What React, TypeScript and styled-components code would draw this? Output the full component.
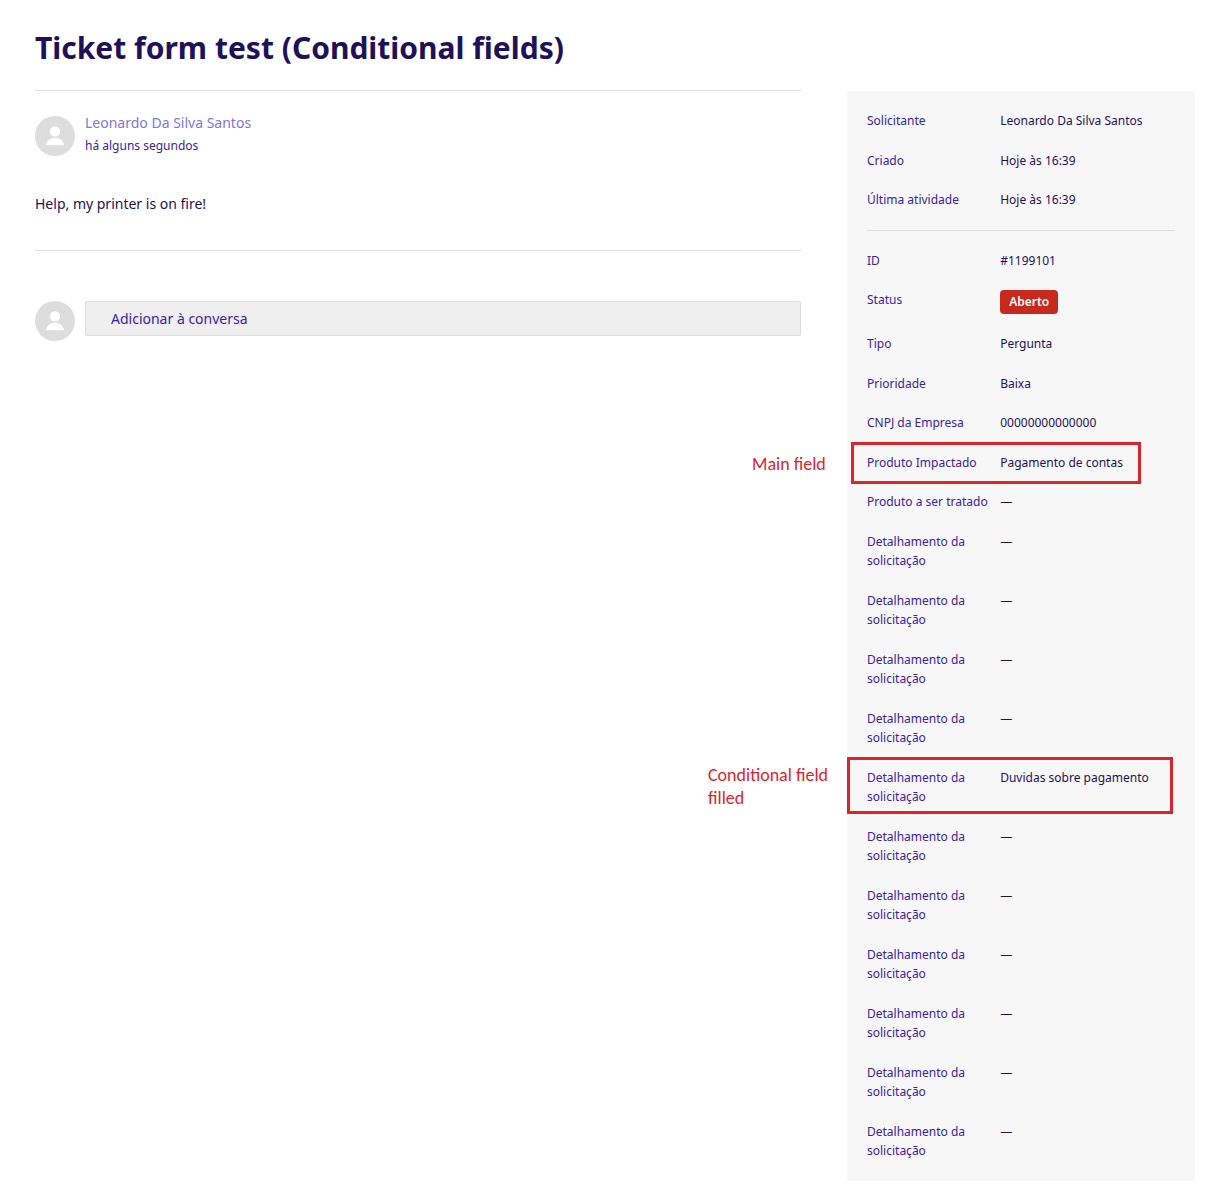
import React from "react";
import styled, { createGlobalStyle } from "styled-components";

const GlobalStyle = createGlobalStyle`
  * { box-sizing: border-box; }
  body {
    margin: 0;
    background: #fff;
    color: #1f1159;
    font-family: "Segoe UI", "Noto Sans", "Open Sans", sans-serif;
    font-size: 14px;
    line-height: 1.5;
  }
`;

const Page = styled.div`
  padding: 24px 15px 4px 35px;
`;

const Title = styled.h1`
  margin: 0 0 18px;
  font-size: 30px;
  font-weight: 700;
  line-height: 48px;
`;

const Columns = styled.div`
  display: flex;
  justify-content: space-between;
  align-items: flex-start;
`;

const Main = styled.main`
  flex: 0 0 66%;
`;

const Message = styled.article`
  border-top: 1px solid #ddd;
  border-bottom: 1px solid #ddd;
  padding: 20px 0 34px;
`;

const Author = styled.header`
  display: flex;
  align-items: flex-end;
  gap: 10px;
`;

const AvatarCircle = styled.svg`
  flex: none;
  width: 40px;
  height: 40px;
`;

const AuthorName = styled.a`
  display: block;
  line-height: 24px;
  color: #8375dc;
  text-decoration: none;
`;

const Time = styled.time`
  display: block;
  font-size: 12px;
  line-height: 21px;
  color: #3b23a0;
`;

const MessageBody = styled.p`
  margin: 36px 0 0;
  line-height: 24px;
`;

const Reply = styled.div`
  display: flex;
  gap: 10px;
  margin-top: 50px;
`;

const ReplyButton = styled.button`
  flex: 1;
  height: 35px;
  padding: 0 25px;
  border: 1px solid #ddd;
  border-radius: 2px;
  background: #efefef;
  color: #3b23a0;
  font: inherit;
  text-align: left;
`;

const Sidebar = styled.aside`
  flex: 0 0 30%;
  margin-top: 1px;
  padding: 0 20px;
  border-radius: 3px 3px 0 0;
  background: #f7f7f7;
  font-size: 12px;
`;

const Details = styled.dl`
  margin: 0;
  padding: 10px 0;
  line-height: 1.625;

  & + & {
    border-top: 1px solid #ddd;
  }
`;

const Row = styled.div`
  position: relative;
  display: grid;
  grid-template-columns: 40% 1fr;
  column-gap: 10px;
  padding: 10px 0;
`;

const Term = styled.dt`
  color: #3b23a0;
`;

const Value = styled.dd`
  margin: 0;
`;

const Badge = styled.span`
  display: block;
  width: fit-content;
  padding: 0 9px;
  border-radius: 4px;
  background: #c72a1c;
  color: #fff;
  font-weight: 600;
  line-height: 24px;
`;

const Highlight = styled.div<{ $inset: number; $width: number; $height: number }>`
  position: absolute;
  top: -1px;
  left: ${(p) => -p.$inset}px;
  width: ${(p) => p.$width}px;
  height: ${(p) => p.$height}px;
  border: 3px solid #dd242c;
`;

const Note = styled.span<{ $gap: number; $width: number }>`
  position: absolute;
  top: 3px;
  bottom: 0;
  right: calc(100% + ${(p) => p.$gap}px);
  display: flex;
  align-items: center;
  width: ${(p) => p.$width}px;
  color: #dd242c;
  font-family: Calibri, Carlito, Lato, sans-serif;
  font-size: 18px;
  line-height: 23px;
`;

type Mark = { note: string; inset: number; width: number; height: number; gap: number; noteWidth: number };
type Field = { label: string; value: string; badge?: boolean; mark?: Mark };

const DASH = "—";
const detail = (value = DASH, mark?: Mark): Field => ({ label: "Detalhamento da solicitação", value, mark });

const activity: Field[] = [
  { label: "Solicitante", value: "Leonardo Da Silva Santos" },
  { label: "Criado", value: "Hoje às 16:39" },
  { label: "Última atividade", value: "Hoje às 16:39" },
];

const ticket: Field[] = [
  { label: "ID", value: "#1199101" },
  { label: "Status", value: "Aberto", badge: true },
  { label: "Tipo", value: "Pergunta" },
  { label: "Prioridade", value: "Baixa" },
  { label: "CNPJ da Empresa", value: "00000000000000" },
  {
    label: "Produto Impactado",
    value: "Pagamento de contas",
    mark: { note: "Main field", inset: 16, width: 290, height: 42, gap: 20, noteWidth: 82 },
  },
  { label: "Produto a ser tratado", value: DASH },
  detail(),
  detail(),
  detail(),
  detail(),
  detail("Duvidas sobre pagamento", {
    note: "Conditional field filled",
    inset: 20,
    width: 326,
    height: 57,
    gap: 6,
    noteWidth: 136,
  }),
  detail(),
  detail(),
  detail(),
  detail(),
  detail(),
  detail(),
];

function Avatar() {
  return (
    <AvatarCircle viewBox="0 0 40 40" aria-hidden="true">
      <circle cx="20" cy="20" r="20" fill="#ddd" />
      <circle cx="20" cy="15.4" r="5.2" fill="#fff" />
      <path d="M11 29.200c.6-4.600 4-7.500 9-7.500s8.400 2.900 9 7.500z" fill="#fff" />
    </AvatarCircle>
  );
}

function FieldList({ fields }: { fields: Field[] }) {
  return (
    <Details>
      {fields.map(({ label, value, badge, mark }, i) => (
        <Row key={i}>
          <Term>{label}</Term>
          <Value>
            {badge ? <Badge>{value}</Badge> : value}
            {mark && (
              <Highlight $inset={mark.inset} $width={mark.width} $height={mark.height}>
                <Note $gap={mark.gap} $width={mark.noteWidth}>
                  {mark.note}
                </Note>
              </Highlight>
            )}
          </Value>
        </Row>
      ))}
    </Details>
  );
}

export default function App() {
  return (
    <>
      <GlobalStyle />
      <Page>
        <Title>Ticket form test (Conditional fields)</Title>
        <Columns>
          <Main>
            <Message>
              <Author>
                <Avatar />
                <div>
                  <AuthorName href="#">Leonardo Da Silva Santos</AuthorName>
                  <Time>há alguns segundos</Time>
                </div>
              </Author>
              <MessageBody>Help, my printer is on fire!</MessageBody>
            </Message>
            <Reply>
              <Avatar />
              <ReplyButton type="button">Adicionar à conversa</ReplyButton>
            </Reply>
          </Main>
          <Sidebar>
            <FieldList fields={activity} />
            <FieldList fields={ticket} />
          </Sidebar>
        </Columns>
      </Page>
    </>
  );
}
